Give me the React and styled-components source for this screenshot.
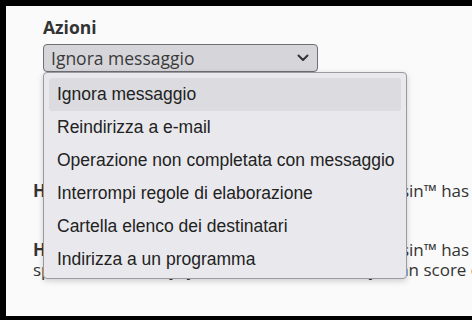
import React, { useState } from "react";
import styled, { createGlobalStyle } from "styled-components";

const GlobalStyle = createGlobalStyle`
  html, body {
    margin: 0;
    padding: 0;
    background: #000;
    overflow: hidden;
  }
`;

const Frame = styled.div`
  margin: 6px 0 4px 6px;
  height: 310px;
  background: #fafafa;
  padding: 8px 0 0 27px;
  box-sizing: border-box;
  overflow: hidden;
  font-family: "Open Sans", sans-serif;
  color: #333;
`;

const Group = styled.div`
  padding-left: 10px;
  width: 275px;
`;

const Label = styled.div`
  font-weight: 700;
  font-size: 17.5px;
  line-height: 26px;
  color: #333;
  margin-bottom: 4px;
`;

const SelectWrap = styled.div`
  position: relative;
  width: 275px;
`;

const SelectBox = styled.div`
  height: 28px;
  box-sizing: border-box;
  border: 1px solid #6f6f74;
  border-radius: 4px;
  background: #d6d6da;
  display: flex;
  align-items: center;
  justify-content: space-between;
  padding: 0 8px 0 7px;
  font-size: 17.5px;
  color: #3a3a3a;
`;

const Menu = styled.ul`
  position: absolute;
  top: 28px;
  left: 0;
  width: 364px;
  box-sizing: border-box;
  margin: 0;
  padding: 5px 5px 2px;
  list-style: none;
  background: #e9e9ed;
  border: 1px solid #9a9a9e;
  border-radius: 4px;
  box-shadow: 0 2px 6px rgba(0, 0, 0, 0.18);
  font-family: "Liberation Sans", Arial, sans-serif;
  font-size: 17.5px;
  color: #222;
  z-index: 2;
`;

const Item = styled.li`
  height: 33px;
  line-height: 33px;
  padding-left: 8px;
  border-radius: 3px;
  background: ${(p) => (p.$active ? "#dcdce0" : "transparent")};
  white-space: nowrap;
`;

const Para = styled.p`
  margin: 0;
  font-size: 17px;
  line-height: 20px;
  white-space: nowrap;
`;

const Paras = styled.div`
  margin-top: 109px;
  display: flex;
  flex-direction: column;
  gap: 39px;
`;

const options = [
  "Ignora messaggio",
  "Reindirizza a e-mail",
  "Operazione non completata con messaggio",
  "Interrompi regole di elaborazione",
  "Cartella elenco dei destinatari",
  "Indirizza a un programma",
];

const Chevron = () => (
  <svg width="12" height="8" viewBox="0 0 12 8">
    <polyline
      points="1.5,1.5 6,6 10.5,1.5"
      fill="none"
      stroke="#333"
      strokeWidth="2"
      strokeLinecap="round"
      strokeLinejoin="round"
    />
  </svg>
);

export default function App() {
  const [value] = useState(options[0]);

  return (
    <>
      <GlobalStyle />
      <Frame>
        <Group>
          <Label>Azioni</Label>
          <SelectWrap>
            <SelectBox>
              <span>{value}</span>
              <Chevron />
            </SelectBox>
            <Menu>
              {options.map((o) => (
                <Item key={o} $active={o === value}>
                  {o}
                </Item>
              ))}
            </Menu>
          </SelectWrap>
        </Group>
        <Paras>
          <Para>
            <b>High:</b> Mark message when Apache SpamAssassin™ has determined
          </Para>
          <Para>
            <b>High:</b> Mark message when Apache SpamAssassin™ has determined
            <br />
            spam for certainty, you can use custom Bayesian score of
          </Para>
        </Paras>
      </Frame>
    </>
  );
}
